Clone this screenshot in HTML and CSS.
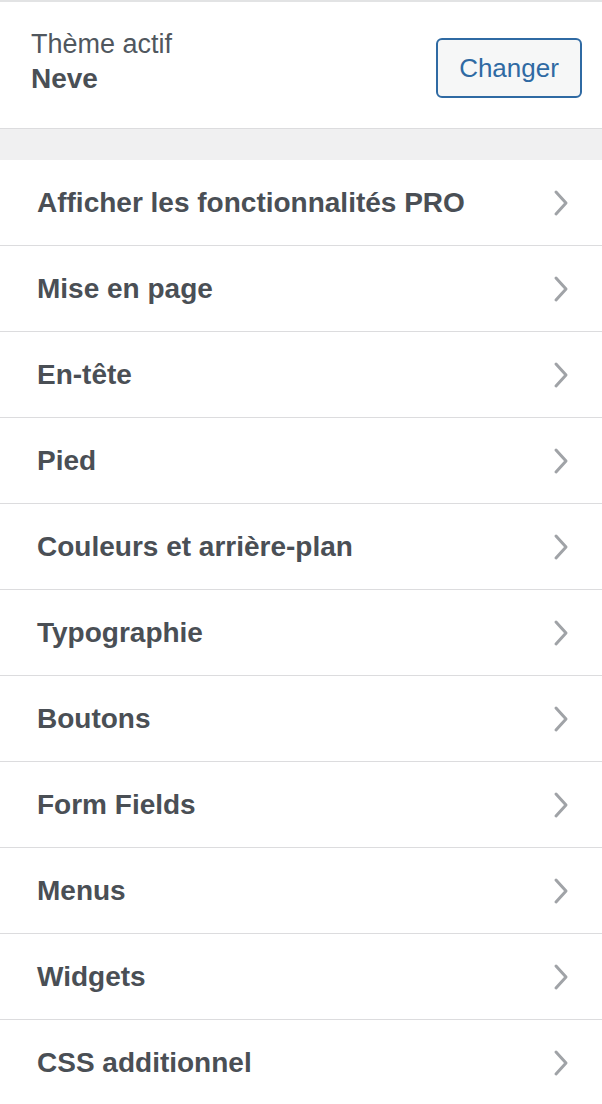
FILE: index.html
```html
<!DOCTYPE html>
<html lang="fr">
<head>
<meta charset="utf-8">
<title>Personnaliser</title>
<link rel="stylesheet" href="styles.css">
</head>
<body>
<div class="panel">
  <div class="theme-header">
    <div class="theme-info">
      <div class="theme-label">Thème actif</div>
      <div class="theme-name">Neve</div>
    </div>
    <button class="change-btn" type="button">Changer</button>
  </div>
  <div class="spacer"></div>
  <ul class="sections">
    <li class="section"><span class="section-title">Afficher les fonctionnalités PRO</span><svg class="chev" viewBox="0 0 18 28" width="18" height="28"><path d="M4 3 L14 14 L4 25"/></svg></li>
    <li class="section"><span class="section-title">Mise en page</span><svg class="chev" viewBox="0 0 18 28" width="18" height="28"><path d="M4 3 L14 14 L4 25"/></svg></li>
    <li class="section"><span class="section-title">En-tête</span><svg class="chev" viewBox="0 0 18 28" width="18" height="28"><path d="M4 3 L14 14 L4 25"/></svg></li>
    <li class="section"><span class="section-title">Pied</span><svg class="chev" viewBox="0 0 18 28" width="18" height="28"><path d="M4 3 L14 14 L4 25"/></svg></li>
    <li class="section"><span class="section-title">Couleurs et arrière-plan</span><svg class="chev" viewBox="0 0 18 28" width="18" height="28"><path d="M4 3 L14 14 L4 25"/></svg></li>
    <li class="section"><span class="section-title">Typographie</span><svg class="chev" viewBox="0 0 18 28" width="18" height="28"><path d="M4 3 L14 14 L4 25"/></svg></li>
    <li class="section"><span class="section-title">Boutons</span><svg class="chev" viewBox="0 0 18 28" width="18" height="28"><path d="M4 3 L14 14 L4 25"/></svg></li>
    <li class="section"><span class="section-title">Form Fields</span><svg class="chev" viewBox="0 0 18 28" width="18" height="28"><path d="M4 3 L14 14 L4 25"/></svg></li>
    <li class="section"><span class="section-title">Menus</span><svg class="chev" viewBox="0 0 18 28" width="18" height="28"><path d="M4 3 L14 14 L4 25"/></svg></li>
    <li class="section"><span class="section-title">Widgets</span><svg class="chev" viewBox="0 0 18 28" width="18" height="28"><path d="M4 3 L14 14 L4 25"/></svg></li>
    <li class="section"><span class="section-title">CSS additionnel</span><svg class="chev" viewBox="0 0 18 28" width="18" height="28"><path d="M4 3 L14 14 L4 25"/></svg></li>
  </ul>
</div>
</body>
</html>
```
FILE: styles.css
```css
html, body {
  margin: 0;
  padding: 0;
  background: #ffffff;
}
body {
  font-family: "Liberation Sans", Arial, sans-serif;
  color: #50575e;
}
.panel {
  width: 602px;
  border-top: 2px solid #e2e3e4;
}
.theme-header {
  box-sizing: border-box;
  height: 127px;
  display: flex;
  justify-content: space-between;
  align-items: flex-start;
  padding: 0 20px 0 31px;
  border-bottom: 1px solid #dcdcde;
  background: #ffffff;
}
.theme-info {
  margin-top: 25px;
}
.theme-label {
  font-size: 27px;
  line-height: 34px;
  color: #50575e;
}
.theme-name {
  font-size: 28px;
  line-height: 36px;
  font-weight: 700;
  color: #4a4f55;
}
.change-btn {
  margin-top: 36px;
  box-sizing: border-box;
  width: 146px;
  height: 60px;
  border: 2px solid #2f6aa3;
  border-radius: 6px;
  background: #f6f7f7;
  color: #2f6aa3;
  font-family: "Liberation Sans", Arial, sans-serif;
  font-size: 26px;
  padding: 0;
}
.spacer {
  height: 31px;
  background: #f0f0f1;
}
.sections {
  list-style: none;
  margin: 0;
  padding: 0;
}
.section {
  display: flex;
  align-items: center;
  justify-content: space-between;
  height: 85px;
  padding: 0 32px 0 37px;
  border-bottom: 1px solid #dcdcde;
  background: #ffffff;
}
.section-title {
  font-size: 28px;
  line-height: 85px;
  font-weight: 700;
  color: #4a4f55;
}
.chev {
  display: block;
  fill: none;
  stroke: #a0a3a7;
  stroke-width: 3;
  stroke-linecap: round;
  stroke-linejoin: round;
}
```
